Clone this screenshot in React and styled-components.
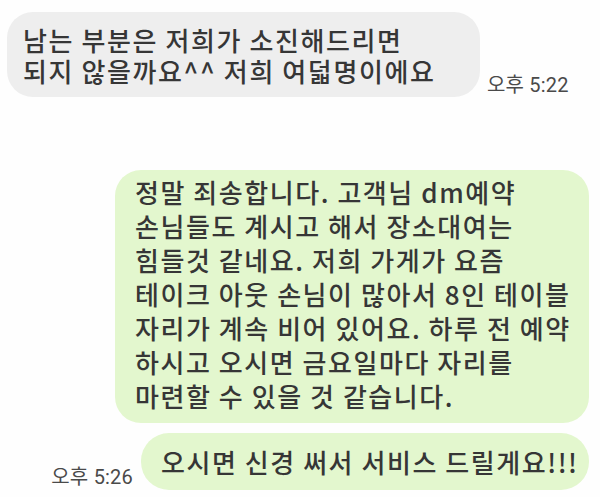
import React from "react";
import styled, { createGlobalStyle } from "styled-components";

const Global = createGlobalStyle`
  html, body { margin: 0; padding: 0; background: #fefefe; }
  body { font-family: "Noto Sans CJK KR", "Noto Sans", sans-serif; }
`;

const Page = styled.div`
  width: 600px;
  height: 497px;
  box-sizing: border-box;
  padding: 12px 11px 0 7px;
  display: flex;
  flex-direction: column;
  overflow: hidden;
`;

const Row = styled.div`
  display: flex;
  align-items: flex-end;
  justify-content: ${(p) => (p.$mine ? "flex-end" : "flex-start")};
  gap: ${(p) => p.$gap || 8}px;
  margin-top: ${(p) => p.$top || 0}px;
`;

const Bubble = styled.div`
  box-sizing: border-box;
  width: ${(p) => p.$w}px;
  background: ${(p) => (p.$mine ? "#e3f7ce" : "#eeeeee")};
  border-radius: ${(p) => p.$r || 26}px;
  padding: ${(p) => p.$pad};
  color: #363636;
  font-size: ${(p) => p.$fs}px;
  font-weight: 500;
  line-height: ${(p) => p.$lh}px;
  letter-spacing: ${(p) => p.$ls || 0}px;
  white-space: nowrap;
`;

const Line = styled.div``;

const Time = styled.span`
  font-family: Roboto, "Noto Sans CJK KR", sans-serif;
  font-size: 20px;
  line-height: 24px;
  letter-spacing: 0.2px;
  color: #4a4a4a;
  margin-bottom: ${(p) => p.$mb || 0}px;
  white-space: nowrap;
`;

export default function App() {
  return (
    <>
      <Global />
      <Page>
        <Row $gap={7}>
          <Bubble $w={473} $fs={26} $lh={31} $ls={1.6} $pad="12px 16px 11px">
            <Line>남는 부분은 저희가 소진해드리면</Line>
            <Line>되지 않을까요^^ 저희 여덟명이에요</Line>
          </Bubble>
          <Time $mb={0}>오후 5:22</Time>
        </Row>
        <Row $mine $top={73}>
          <Bubble $mine $w={474} $fs={26} $lh={34} $ls={1.55} $pad="5px 20px 10px">
            <Line>정말 죄송합니다. 고객님 dm예약</Line>
            <Line>손님들도 계시고 해서 장소대여는</Line>
            <Line>힘들것 같네요. 저희 가게가 요즘</Line>
            <Line>테이크 아웃 손님이 많아서 8인 테이블</Line>
            <Line>자리가 계속 비어 있어요. 하루 전 예약</Line>
            <Line>하시고 오시면 금요일마다 자리를</Line>
            <Line>마련할 수 있을 것 같습니다.</Line>
          </Bubble>
        </Row>
        <Row $mine $top={10} $gap={8}>
          <Time $mb={1}>오후 5:26</Time>
          <Bubble $mine $w={448} $fs={26} $lh={35} $ls={1.55} $r={28} $pad="11px 20px">
            <Line>오시면 신경 써서 서비스 드릴게요!!!</Line>
          </Bubble>
        </Row>
      </Page>
    </>
  );
}
